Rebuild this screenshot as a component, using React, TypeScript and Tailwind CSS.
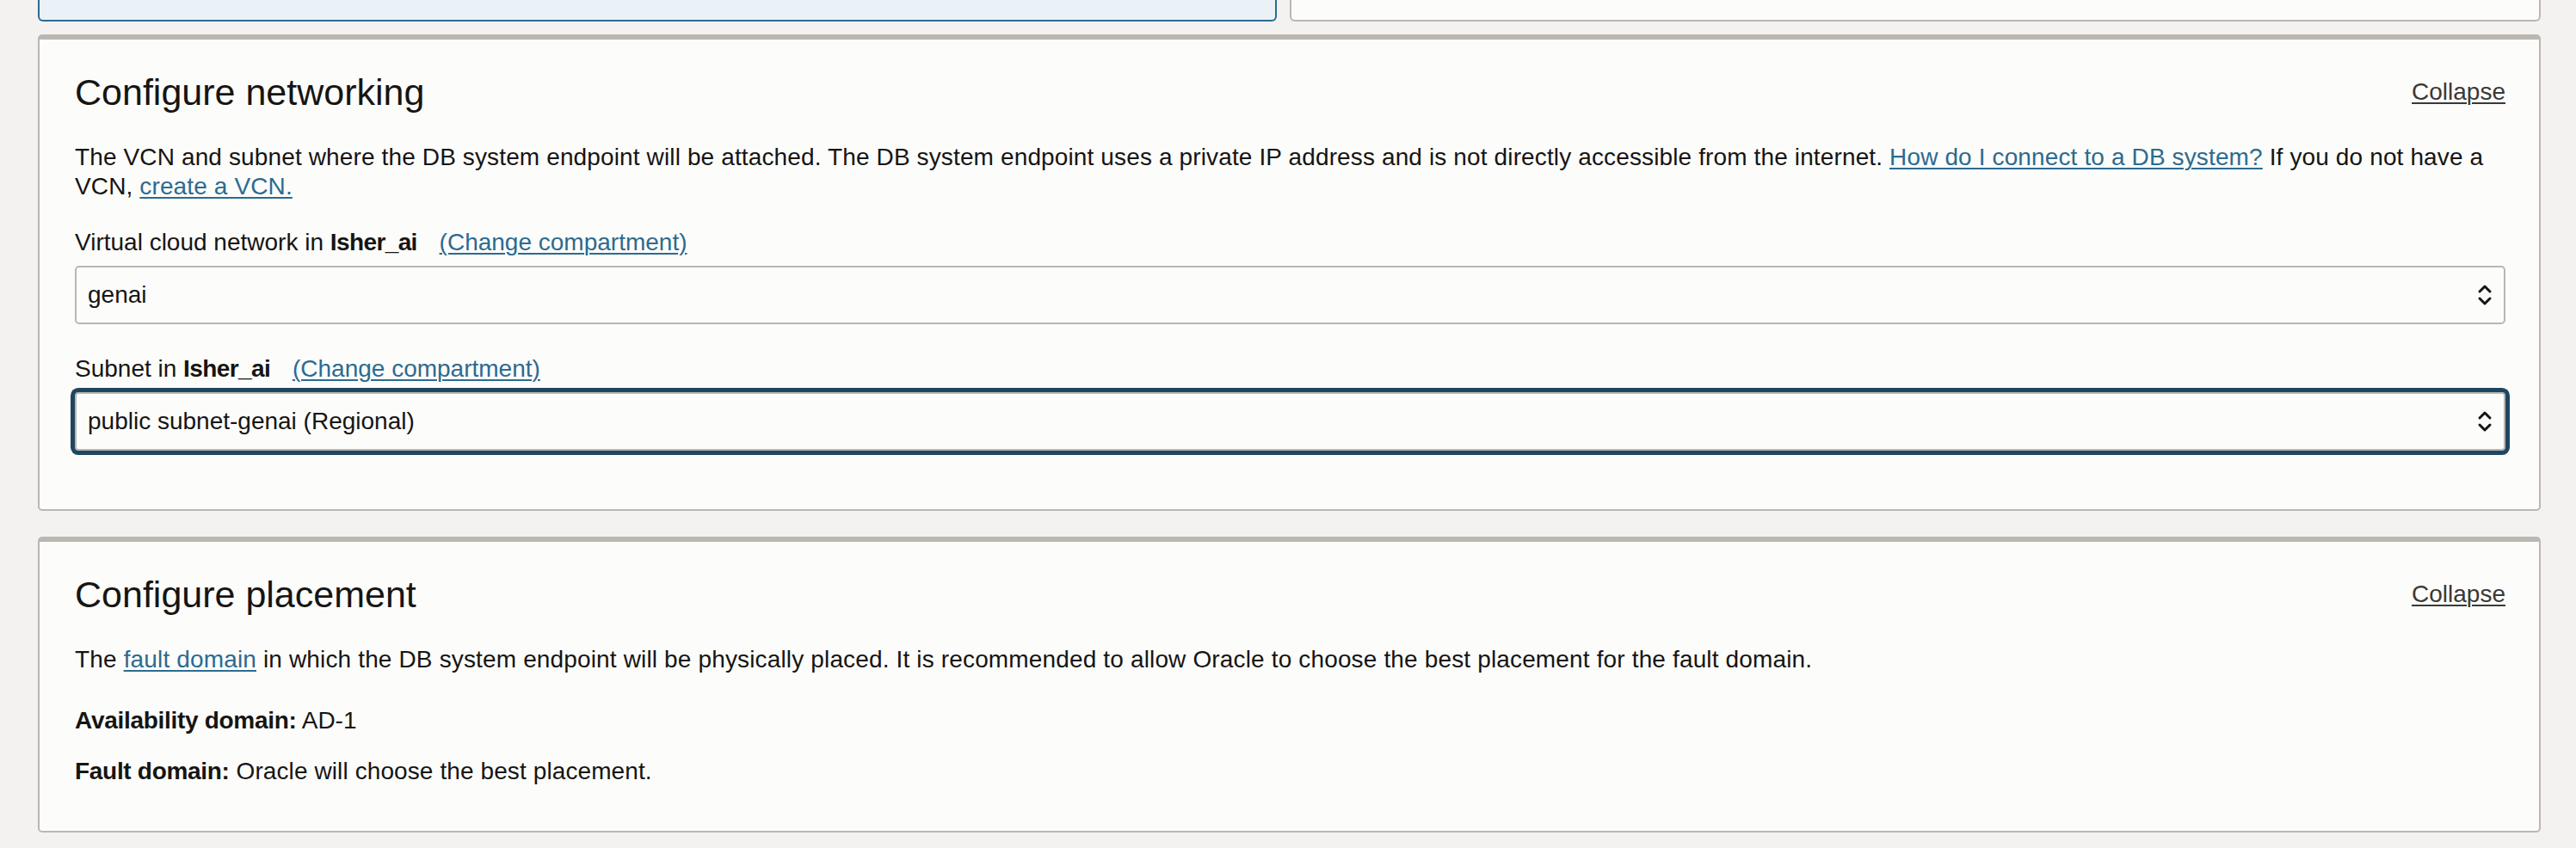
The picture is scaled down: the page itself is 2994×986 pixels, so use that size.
import React from 'react';

const Chevrons = () => (
  <svg width="18" height="28" viewBox="0 0 18 28" fill="none" stroke="#161513" strokeWidth="3" strokeLinecap="round" strokeLinejoin="round">
    <path d="M3 10 L9 4 L15 10" />
    <path d="M3 18 L9 24 L15 18" />
  </svg>
);

const SelectBox = ({ value, focused }: { value: string; focused?: boolean }) => (
  <div
    className={
      focused
        ? 'mt-[10px] h-[68px] flex items-center justify-between pl-[13px] pr-[13px] bg-[#fcfcfb] border-2 border-[#bcb6b1] rounded-[4px] shadow-[0_0_0_5px_#1f4660]'
        : 'mt-[10px] h-[68px] flex items-center justify-between pl-[13px] pr-[13px] bg-[#fcfcfb] border-2 border-[#bcb6b1] rounded-[5px]'
    }
  >
    <span>{value}</span>
    <Chevrons />
  </div>
);

const Link = ({ children }: { children: React.ReactNode }) => (
  <a href="#" className="text-[#2c6b8f] underline decoration-2 underline-offset-[3px]">
    {children}
  </a>
);

const Header = ({ title }: { title: string }) => (
  <div className="flex items-center justify-between">
    <h2 className="text-[43px] leading-[50px] font-normal">{title}</h2>
    <a href="#" className="text-[#3a3938] underline decoration-2 underline-offset-[3px]">
      Collapse
    </a>
  </div>
);

export default function App() {
  return (
    <div className="min-h-screen bg-[#f3f2f1] pl-[44px] pr-[41px] text-[28px] leading-[34px] text-[#161513] font-['Liberation_Sans',Arial,sans-serif]">
      {/* bottom of the cards above */}
      <div className="flex gap-[15px]">
        <div className="w-[1440px] h-[25px] bg-[#eaf2f7] border-x-2 border-b-2 border-[#2c6b8f] rounded-b-[6px]" />
        <div className="flex-1 h-[25px] bg-[#fcfcfb] border-x-2 border-b-2 border-[#bcb6b1] rounded-b-[6px]" />
      </div>

      {/* Configure networking */}
      <section className="mt-[15px] bg-[#fcfcfb] border-x-2 border-b-2 border-t-[6px] border-[#bcb6b1] rounded-[5px] pl-[41px] pr-[39px] pt-[36px] pb-[68px]">
        <Header title="Configure networking" />
        <p className="mt-[34px] tracking-[0.13px]">
          The VCN and subnet where the DB system endpoint will be attached. The DB system endpoint uses a private IP address and is not directly accessible from the internet.{' '}
          <Link>How do I connect to a DB system?</Link> If you do not have a VCN, <Link>create a VCN.</Link>
        </p>

        <div className="mt-[31px]">
          Virtual cloud network in <b className="tracking-[-0.6px]">Isher_ai</b>
          <span className="ml-[18px]">
            {' '}
            <Link>(Change compartment)</Link>
          </span>
        </div>
        <SelectBox value="genai" />

        <div className="mt-[35px]">
          Subnet in <b className="tracking-[-0.6px]">Isher_ai</b>
          <span className="ml-[18px]">
            {' '}
            <Link>(Change compartment)</Link>
          </span>
        </div>
        <SelectBox value="public subnet-genai (Regional)" focused />
      </section>

      {/* Configure placement */}
      <section className="mt-[30px] bg-[#fcfcfb] border-x-2 border-b-2 border-t-[6px] border-[#bcb6b1] rounded-[5px] pl-[41px] pr-[39px] pt-[36px] pb-[52px]">
        <Header title="Configure placement" />
        <p className="mt-[34px] tracking-[0.15px]">
          The <Link>fault domain</Link> in which the DB system endpoint will be physically placed. It is recommended to allow Oracle to choose the best placement for the fault domain.
        </p>
        <p className="mt-[37px]">
          <b className="tracking-[-0.3px]">Availability domain:</b> AD-1
        </p>
        <p className="mt-[25px] tracking-[0.1px]">
          <b className="tracking-[-0.3px]">Fault domain:</b> Oracle will choose the best placement.
        </p>
      </section>
    </div>
  );
}
